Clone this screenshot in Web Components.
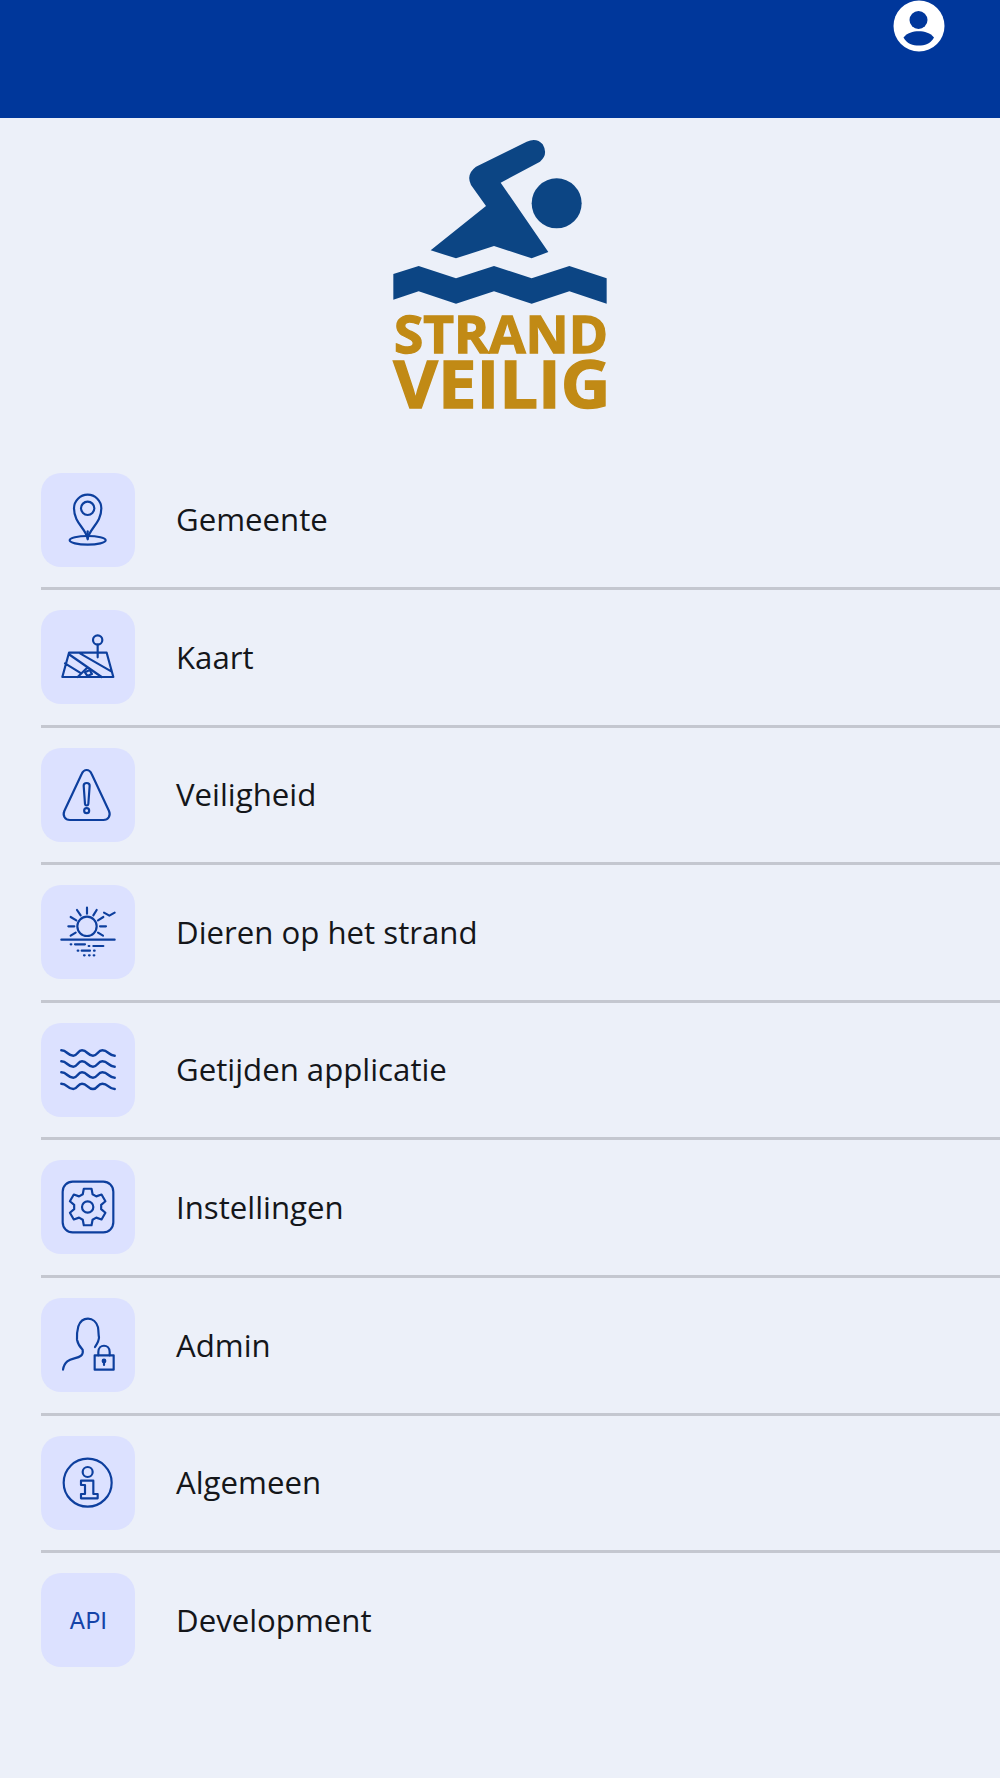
<!DOCTYPE html>
<html lang="nl">
<head>
<meta charset="utf-8">
<title>Strand Veilig</title>
<style>
html,body{margin:0;padding:0;background:#ecf0f9;}
body{min-height:1778px;font-family:"Open Sans",sans-serif;color:#14161a;overflow:hidden;}
</style>
</head>
<body>
<app-header></app-header>
<app-logo></app-logo>
<menu-list>
  <menu-item icon="pin">Gemeente</menu-item>
  <menu-item icon="map">Kaart</menu-item>
  <menu-item icon="warn">Veiligheid</menu-item>
  <menu-item icon="sun">Dieren op het strand</menu-item>
  <menu-item icon="waves">Getijden applicatie</menu-item>
  <menu-item icon="gear">Instellingen</menu-item>
  <menu-item icon="admin">Admin</menu-item>
  <menu-item icon="info">Algemeen</menu-item>
  <menu-item icon="api" last>Development</menu-item>
</menu-list>
<script>
function gearPath(cx,cy,n,ro,ri,a1,a2){
  var d='';
  for(var i=0;i<n;i++){
    var c=-90+i*360/n;
    [[ri,c-a2],[ro,c-a1],[ro,c+a1],[ri,c+a2]].forEach(function(p,j){
      var t=p[1]*Math.PI/180;
      d+=((i===0&&j===0)?'M':'L')+(cx+p[0]*Math.cos(t)).toFixed(1)+' '+(cy+p[0]*Math.sin(t)).toFixed(1);
    });
  }
  return d+'Z';
}
var wave='c18 0 18 16 36 16c13 0 13 -16 26 -16c16 0 17 16 33 16c14 0 14 -16 28 -16c18 0 19 16 37 16';
var ICONS={
  pin:'<path d="M140 197C134 165 99 150 99 106A41 41 0 0 1 181 106C181 150 146 165 140 197Z"/><circle cx="140" cy="106" r="20"/><ellipse cx="140" cy="202" rx="54" ry="13"/><path d="M140 175V199"/>',
  map:'<circle cx="170" cy="90" r="14"/><path d="M170 104V142M84 128H197L217 201H64ZM87 135L182 201M117 130L212 185M72 160L117 188M137 175L110 201"/><path d="M132 187L146 180L153 192L139 198Z"/>',
  warn:'<path d="M122 78C129 62 145 62 152 78L204 189C210 203 202 216 187 216H87C72 216 64 203 70 189Z"/><path d="M137 105C143 105 146 108 146 113L142 168C141 174 133 174 132 168L128 113C128 108 131 105 137 105Z"/><circle cx="137" cy="188" r="7.5"/>',
  sun:'<circle cx="138" cy="124" r="29"/><path d="M138 68V86M108 75L119 91M167 75L157 91M89 96L106 106M187 96L171 106M82 124H100M177 124H195M89 152L104 143M186 152L171 143M189 83L205 92L221 83M61 164H221M102 178H132M157 183H187M122 197H147"/><path d="M89 178h2M143 183h2M110 197h2M159 197h2M129 211h2M144 211h2M158 211h2"/>',
  waves:'<g stroke-width="7.5">'+[82,115,148,182].map(function(y){return '<path d="M61 '+y+wave+'"/>';}).join('')+'</g>',
  gear:'<rect x="65" y="65" width="152" height="152" rx="30"/><path d="'+gearPath(140,141,6,56,41,12,21)+'"/><circle cx="140" cy="141" r="17"/>',
  admin:'<path d="M66 215C70 190 85 185 100 181C118 177 128 172 125 155C118 148 110 135 108 125C107 110 108 100 112 85C118 68 130 62 141 62C155 62 167 72 171 88C173 100 172 110 174 118C174 130 168 138 162 147"/><rect x="161" y="172" width="57" height="43"/><path d="M172 172V162C172 137 206 137 206 162V172"/><circle cx="189" cy="189" r="4" fill="currentColor"/><path d="M189 189V201"/>',
  info:'<circle cx="140" cy="140" r="72"/><circle cx="140" cy="108" r="15"/><path d="M120 134H157V174H170V187H120V174H132V147H120Z"/>'
};

class AppHeader extends HTMLElement{
  constructor(){super();
    this.attachShadow({mode:'open'}).innerHTML=`<style>
      :host{display:flex;justify-content:flex-end;align-items:flex-start;height:117.5px;background:#00379b;padding-right:55px;box-sizing:border-box;}
      svg{display:block;width:52px;height:52px;}
    </style>
    <svg viewBox="0 0 52 52" aria-label="Account">
      <circle cx="26" cy="26" r="25.5" fill="#fff"/>
      <circle cx="25.5" cy="20" r="9" fill="#00379b"/>
      <path d="M10.5 37.5C14 33 20 31.3 25.7 31.3C31.5 31.3 37.5 33 41 37.5C37.5 44 31.5 45.6 25.7 45.6C20 45.6 14 44 10.5 37.5Z" fill="#00379b"/>
    </svg>`;
  }
}
class AppLogo extends HTMLElement{
  constructor(){super();
    this.attachShadow({mode:'open'}).innerHTML=`<style>
      :host{display:flex;justify-content:center;padding-top:7.5px;}
      svg{display:block;width:260px;height:295px;overflow:visible;}
      text{font-family:"Open Sans",sans-serif;font-weight:700;fill:#c18a15;stroke:#c18a15;stroke-width:4;}
    </style>
    <svg viewBox="0 0 780 885">
      <g fill="#0c4584">
        <path d="M470 50Q500 37 518 58Q536 88 510 110L392 173L535 381L485 400L372 363L258 400L182 376L348 243L303 180Q287 148 318 125Z"/>
        <circle cx="560" cy="235" r="75"/>
        <path d="M70 447L146 423L258 460L372 423L485 460L598 423L710 460V536L598 499L485 536L372 499L258 536L146 499L70 524Z"/>
      </g>
      <text x="72" y="685" font-size="158" textLength="642" lengthAdjust="spacingAndGlyphs">STRAND</text>
      <text x="70" y="849" font-size="200" textLength="652" lengthAdjust="spacingAndGlyphs">VEILIG</text>
    </svg>`;
  }
}
class MenuList extends HTMLElement{
  constructor(){super();
    this.attachShadow({mode:'open'}).innerHTML=`<style>
      :host{display:flex;flex-direction:column;padding:32.5px 0 0 41px;}
    </style><slot></slot>`;
  }
}
class MenuItem extends HTMLElement{
  constructor(){super();
    var name=this.getAttribute('icon');
    var inner=name==='api'
      ? '<span class="api">API</span>'
      : '<svg viewBox="0 0 282 282" fill="none" stroke="currentColor" stroke-width="6.5" stroke-linejoin="round" stroke-linecap="round">'+ICONS[name]+'</svg>';
    this.attachShadow({mode:'open'}).innerHTML=`<style>
      :host{display:flex;align-items:center;gap:41px;height:137.6px;box-sizing:border-box;padding:20px 0 20.6px;border-bottom:3px solid #c4c7d0;}
      :host([last]){border-bottom-color:transparent;}
      .tile{flex:none;width:94px;height:94px;border-radius:20px;background:#dce1ff;color:#0d3f9e;display:flex;align-items:center;justify-content:center;}
      svg{display:block;width:94px;height:94px;}
      .api{font:400 23.5px Inter,sans-serif;color:#1443a8;}
      .label{font:400 31.2px/41px "Open Sans",sans-serif;color:#14161a;}
    </style>
    <div class="tile">${inner}</div><div class="label"><slot></slot></div>`;
  }
}
customElements.define('app-header',AppHeader);
customElements.define('app-logo',AppLogo);
customElements.define('menu-list',MenuList);
customElements.define('menu-item',MenuItem);
</script>
</body>
</html>
